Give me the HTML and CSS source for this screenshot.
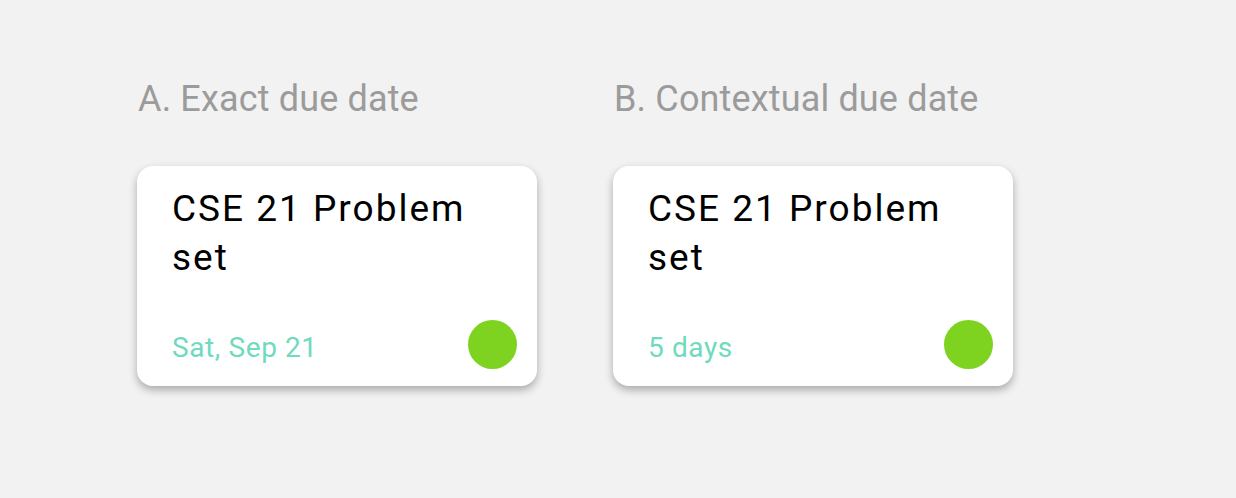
FILE: index.html
```html
<!DOCTYPE html>
<html lang="en">
<head>
<meta charset="utf-8">
<title>Due date variants</title>
<link rel="stylesheet" href="styles.css">
</head>
<body>
<main class="board">
  <section class="variant">
    <h2 class="variant-title">A. Exact due date</h2>
    <div class="card">
      <div class="card-title">CSE 21 Problem set</div>
      <div class="card-footer">
        <span class="due">Sat, Sep 21</span>
        <span class="dot"></span>
      </div>
    </div>
  </section>
  <section class="variant">
    <h2 class="variant-title">B. Contextual due date</h2>
    <div class="card">
      <div class="card-title">CSE 21 Problem set</div>
      <div class="card-footer">
        <span class="due">5 days</span>
        <span class="dot"></span>
      </div>
    </div>
  </section>
</main>
</body>
</html>
```

FILE: styles.css
```css
html, body {
  margin: 0;
  padding: 0;
}
body {
  background: #f2f2f2;
  width: 1236px;
  height: 498px;
  overflow: hidden;
  font-family: Roboto, "Liberation Sans", sans-serif;
}
.board {
  display: flex;
  gap: 76px;
  padding: 81px 0 0 137px;
}
.variant {
  display: flex;
  flex-direction: column;
  width: 400px;
}
.variant-title {
  margin: 0 0 49px 1px;
  font-size: 36px;
  line-height: 36px;
  font-weight: 400;
  color: #9b9b9b;
  letter-spacing: 0.15px;
}
.card {
  box-sizing: border-box;
  height: 220px;
  background: #ffffff;
  border-radius: 16px;
  box-shadow: 0 4px 9px rgba(0, 0, 0, 0.3);
  padding: 18px 20px 17px 35px;
  display: flex;
  flex-direction: column;
}
.card-title {
  font-size: 37px;
  line-height: 49px;
  color: #000000;
  letter-spacing: 2px;
  width: 330px;
}
.card-footer {
  margin-top: auto;
  display: flex;
  justify-content: space-between;
  align-items: flex-end;
}
.due {
  font-size: 28px;
  line-height: 28px;
  color: #6fdabd;
  letter-spacing: 0.6px;
  margin-bottom: 7px;
}
.dot {
  width: 49px;
  height: 49px;
  border-radius: 50%;
  background: #7ed321;
}
```
